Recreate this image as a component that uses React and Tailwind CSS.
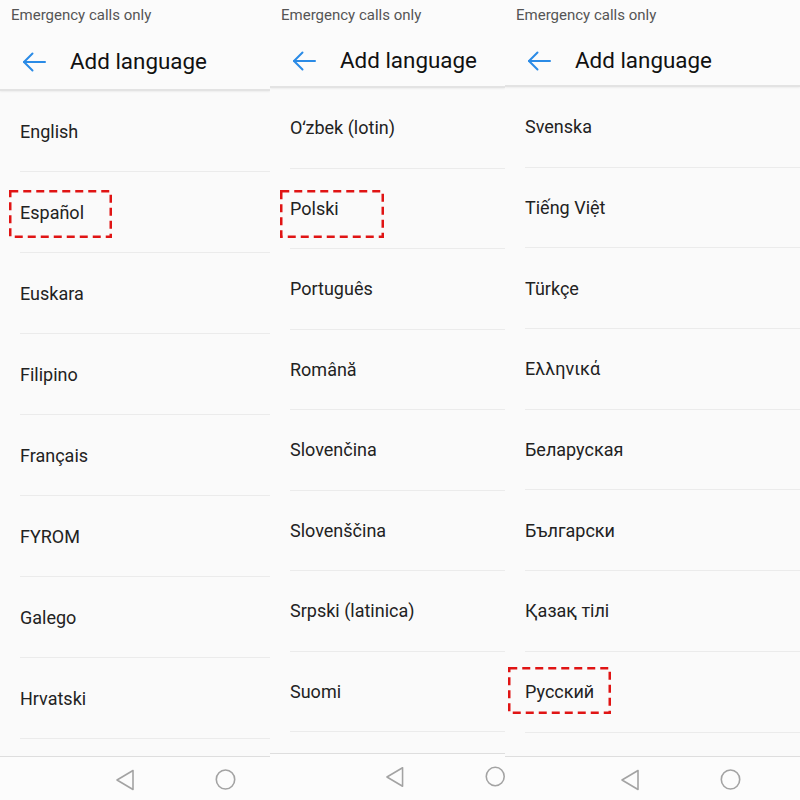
import React from "react";

const panels = [
  {
    key: "a",
    width: "w-[270px]",
    bar: "h-[59px] pt-[4px]",
    row: "h-[81px]",
    nav: "h-[44px] pt-[12px]",
    items: ["English", "Español", "Euskara", "Filipino", "Français", "FYROM", "Galego", "Hrvatski"],
    marked: 1,
    box: "left-[-11px] top-[18px] w-[103px] h-[48px]",
  },
  {
    key: "b",
    width: "w-[235px]",
    bar: "h-[56px] pt-[6px]",
    row: "h-[80.5px]",
    nav: "h-[47px] pt-[12px]",
    items: ["Oʻzbek (lotin)", "Polski", "Português", "Română", "Slovenčina", "Slovenščina", "Srpski (latinica)", "Suomi"],
    marked: 1,
    box: "left-[-10px] top-[21px] w-[104px] h-[48px]",
  },
  {
    key: "c",
    width: "w-[295px]",
    bar: "h-[55px] pt-[7px]",
    row: "h-[80.7px]",
    nav: "h-[44px] pt-[12px]",
    items: ["Svenska", "Tiếng Việt", "Türkçe", "Ελληνικά", "Беларуская", "Български", "Қазақ тілі", "Русский"],
    marked: 7,
    box: "left-[-17px] top-[15px] w-[103px] h-[47px]",
  },
];

function BackArrow() {
  return (
    <svg width="24" height="20" viewBox="0 0 24 20" fill="none" stroke="#2b8be6" strokeWidth="2" strokeLinecap="round" strokeLinejoin="round">
      <path d="M23 10H2" />
      <path d="M10.5 1.5L2 10l8.5 8.5" />
    </svg>
  );
}

function DashedBox({ className }) {
  return (
    <svg className={`absolute ${className} overflow-visible pointer-events-none`} preserveAspectRatio="none">
      <rect x="1.25" y="1.25" width="calc(100% - 2.5px)" height="calc(100% - 2.5px)" fill="none" stroke="#e01414" strokeWidth="2.5" strokeDasharray="8 5" />
    </svg>
  );
}

function NavBar({ className }) {
  return (
    <div className={`${className} shrink-0 border-t border-[#dedede] bg-[#fcfcfc] flex items-start pl-[115px] gap-[80px]`}>
      <svg width="20" height="22" viewBox="0 0 20 22" fill="none" stroke="#a3a3a3" strokeWidth="1.6" strokeLinejoin="round">
        <path d="M18 1.5V20.5L2 11Z" />
      </svg>
      <svg width="21" height="21" viewBox="0 0 21 21" fill="none" stroke="#a3a3a3" strokeWidth="1.6">
        <ellipse cx="10.5" cy="10.5" rx="9.2" ry="9.5" />
      </svg>
    </div>
  );
}

function Panel({ p }) {
  return (
    <div className={`${p.width} h-[800px] shrink-0 flex flex-col bg-[#fafafa] overflow-hidden`}>
      <div className="h-[30px] shrink-0 flex items-center pl-[11px] text-[15px] text-[#555555] bg-[#fbfbfb]">
        Emergency calls only
      </div>
      <div className={`${p.bar} shrink-0 flex items-center bg-[#fbfbfb]`}>
        <div className="ml-[22px] w-[24px] flex items-center">
          <BackArrow />
        </div>
        <div className="ml-[24px] text-[22.4px] text-[#111111]">Add language</div>
      </div>
      <div className="h-[2px] shrink-0 bg-[#e3e3e3] shadow-[0_1px_2px_rgba(0,0,0,0.06)]" />
      <div className="flex-1 overflow-hidden">
        {p.items.map((name, i) => (
          <div key={name} className={`${p.row} ml-[20px] relative flex items-center border-b border-[#ebebeb] text-[18px] text-[#222222]`}>
            <span>{name}</span>
            {i === p.marked && <DashedBox className={p.box} />}
          </div>
        ))}
      </div>
      <NavBar className={p.nav} />
    </div>
  );
}

export default function App() {
  return (
    <div className="w-[800px] h-[800px] flex overflow-hidden bg-[#fafafa] font-['Roboto','Noto_Sans',sans-serif]">
      {panels.map((p) => (
        <Panel key={p.key} p={p} />
      ))}
    </div>
  );
}
